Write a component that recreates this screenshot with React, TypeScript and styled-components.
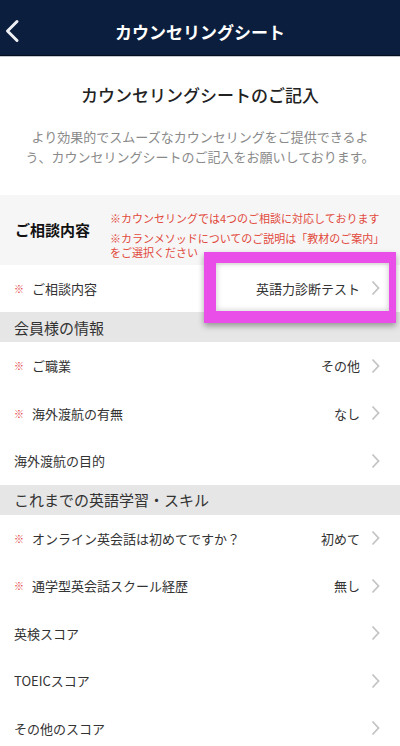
import { createGlobalStyle, styled } from "styled-components";

type Item = { label: string; required?: boolean; value?: string };

const profile: Item[] = [
  { label: "ご職業", required: true, value: "その他" },
  { label: "海外渡航の有無", required: true, value: "なし" },
  { label: "海外渡航の目的" },
];

const skills: Item[] = [
  { label: "オンライン英会話は初めてですか？", required: true, value: "初めて" },
  { label: "通学型英会話スクール経歴", required: true, value: "無し" },
  { label: "英検スコア" },
  { label: "TOEICスコア" },
  { label: "その他のスコア" },
];

function Chevron() {
  return (
    <svg width="9" height="16" viewBox="0 0 9 16">
      <path d="M1.5 1.5 L7.5 8 L1.5 14.5" fill="none" stroke="#c4c4c4" strokeWidth="1.8" />
    </svg>
  );
}

function FormRow({ item, children }: { item: Item; children?: React.ReactNode }) {
  return (
    <Row>
      <Label>
        {item.required && <Mark>※</Mark>}
        {item.label}
      </Label>
      <Right>
        {item.value && <Value>{item.value}</Value>}
        <Chevron />
      </Right>
      {children}
    </Row>
  );
}

export default function App() {
  return (
    <>
      <GlobalStyle />
      <Page>
        <NavBar>
          <Back>
            <svg width="16" height="24" viewBox="0 0 16 24">
              <path d="M13 2.5 L3.5 12 L13 21.5" fill="none" stroke="#eef0f3" strokeWidth="3" strokeLinecap="round" strokeLinejoin="round" />
            </svg>
          </Back>
          <NavTitle>カウンセリングシート</NavTitle>
        </NavBar>
        <Intro>
          <Title>カウンセリングシートのご記入</Title>
          <Desc>
            より効果的でスムーズなカウンセリングをご提供できるよう、カウンセリングシートのご記入をお願いしております。
          </Desc>
        </Intro>
        <Notice>
          <NoticeLabel>ご相談内容</NoticeLabel>
          <Notes>
            <Note>※カウンセリングでは4つのご相談に対応しております</Note>
            <Note>※カランメソッドについてのご説明は「教材のご案内」をご選択ください</Note>
          </Notes>
        </Notice>
        <FormRow item={{ label: "ご相談内容", required: true, value: "英語力診断テスト" }}>
          <Highlight />
        </FormRow>
        <SectionHead>会員様の情報</SectionHead>
        {profile.map((item) => (
          <FormRow key={item.label} item={item} />
        ))}
        <SectionHead>これまでの英語学習・スキル</SectionHead>
        {skills.map((item) => (
          <FormRow key={item.label} item={item} />
        ))}
      </Page>
    </>
  );
}

const GlobalStyle = createGlobalStyle`
  * { box-sizing: border-box; }
  body {
    margin: 0;
    background: #ffffff;
    font-family: "Noto Sans CJK JP", "Noto Sans", sans-serif;
  }
`;

const Page = styled.div`
  width: 400px;
  height: 746px;
  overflow: hidden;
  background: #ffffff;
`;

const NavBar = styled.header`
  height: 56px;
  display: flex;
  align-items: center;
  justify-content: center;
  position: relative;
  background: #0b1e3e;
  border-bottom: 1px solid #050d1c;
  box-shadow: 0 1px 0 #c3c8cf;
  padding-bottom: 1px;
`;

const Back = styled.div`
  position: absolute;
  left: 4px;
  top: 19px;
  display: flex;
`;

const NavTitle = styled.h1`
  margin: 0;
  font-size: 17px;
  font-weight: 700;
  color: #ffffff;
  padding-top: 8px;
`;

const Intro = styled.section`
  padding: 27px 20px 28px;
  text-align: center;
`;

const Title = styled.h2`
  margin: 0;
  font-size: 17px;
  line-height: 24px;
  font-weight: 500;
  color: #222222;
`;

const Desc = styled.p`
  margin: 20px 0 0;
  font-size: 13px;
  line-height: 20px;
  color: #8a8a8a;
`;

const Notice = styled.section`
  display: flex;
  align-items: center;
  background: #f6f6f6;
  height: 69.5px;
`;

const NoticeLabel = styled.div`
  flex: 0 0 110px;
  padding-left: 15px;
  font-size: 15px;
  font-weight: 700;
  color: #111111;
`;

const Notes = styled.div`
  flex: 1;
  display: flex;
  flex-direction: column;
  gap: 6px;
  padding-top: 10px;
  padding-right: 16px;
`;

const Note = styled.p`
  margin: 0;
  font-size: 11px;
  line-height: 14px;
  color: #e2493c;
`;

const Row = styled.div`
  position: relative;
  height: 47.5px;
  display: flex;
  align-items: center;
  justify-content: space-between;
  padding: 0 20px 0 14px;
  background: #ffffff;
`;

const Label = styled.div`
  display: flex;
  align-items: center;
  font-size: 13px;
  color: #333333;
`;

const Mark = styled.span`
  font-size: 10px;
  color: #e0393a;
  width: 10px;
  margin-right: 8px;
`;

const Right = styled.div`
  display: flex;
  align-items: center;
  gap: 11px;
`;

const Value = styled.span`
  font-size: 13px;
  color: #333333;
`;

const SectionHead = styled.div`
  height: 30px;
  display: flex;
  align-items: center;
  padding-left: 14px;
  background: #e6e6e6;
  font-size: 15px;
  color: #333333;
`;

const Highlight = styled.div`
  position: absolute;
  left: 204px;
  right: 4px;
  top: -13px;
  bottom: -11px;
  border: 11px solid #ea4ee9;
  border-left-width: 12px;
  border-right-width: 7px;
  border-bottom-width: 12px;
  box-shadow: 0 3px 6px rgba(0, 0, 0, 0.35), inset 0 0 6px rgba(0, 0, 0, 0.22);
  pointer-events: none;
`;
